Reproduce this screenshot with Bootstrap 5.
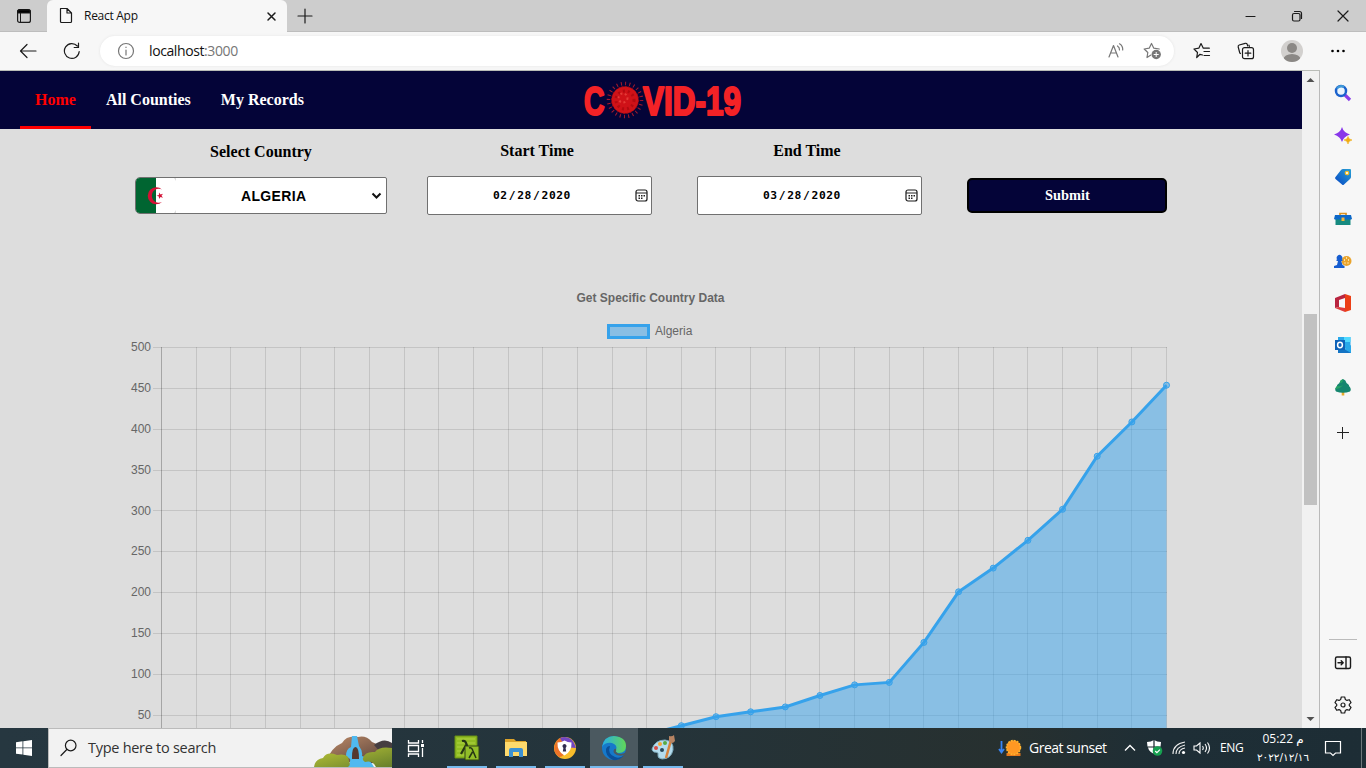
<!DOCTYPE html>
<html lang="en">
<head>
<meta charset="utf-8">
<meta name="viewport" content="width=device-width, initial-scale=1">
<title>React App</title>
<link href="https://cdn.jsdelivr.net/npm/bootstrap@5.3.0/dist/css/bootstrap.min.css" rel="stylesheet">
<style>
body{font-family:"Open Sans","Noto Sans",sans-serif;font-size:12px;line-height:1.3;color:#111;background:#f7f7f7}
svg{display:block;flex:none}
.ln{fill:none;stroke:#1b1b1b;stroke-width:1.2;stroke-linecap:round;stroke-linejoin:round}
.cell{display:flex;align-items:center;justify-content:center;flex:none}
.tabs{height:32px;background:#cdcdcd;flex:none;box-shadow:inset 0 -1px #bdbdbd}
.tab{width:240px;background:#f7f7f7;border-radius:6px 6px 0 0;padding-left:10px}
.tab span{letter-spacing:-.28px;font-size:12px;margin-left:9px}
.tools{height:38px;flex:none}
.address{width:1074px;height:30px;border-radius:15px;background:#fff;margin-left:6px;box-shadow:0 0 3px #e4e4e4}
.address p{font-size:14px;letter-spacing:-.4px;margin-left:14px}
.port{color:#767676}
.view{width:1320px;border-top:1px solid #b9bcb7;border-right:1px solid #b9b9b9}
.site{background:#ddd;font-family:"Liberation Serif",serif;font-size:16px;font-weight:700;color:#000}
.topnav{height:58px;background:#040438;padding-left:20px}
.topnav a{height:58px;padding:0 15px;line-height:58px;color:#fff;text-decoration:none}
.topnav a.on{color:red;border-bottom:3px solid red}
.brandmark{margin-left:260px}
.controls{height:146px;padding:12px 0 0 135px}
.controls label{height:20px;line-height:20px;display:block;text-align:center}
.fld{background:#fff;border:1px solid #707070}
.country{width:252px;height:37px;margin-top:16px;border-radius:5px 2px 2px 5px;font:700 14px "Liberation Sans",sans-serif;overflow:hidden}
.when{width:225px;height:39px;margin-top:15px;border-radius:2px;font:700 11.3px "DejaVu Sans Mono",monospace;letter-spacing:.5px}
.when i{font-style:normal;margin:0 1.2px}
.send{width:200px;height:35px;margin-top:37px;background:#040438;border:2px solid #000;border-radius:5px;color:#fff;font:inherit;font-size:14.4px;padding:0 0 0 1px}
.scroller{width:17px;background:#f1f1f1}
.thumb{height:191px;width:13px;background:#c1c1c1;margin-top:227px}
.side{width:46px}
.side .cell{height:42px}
.rule{height:1px;width:28px;background:#bbb;margin-bottom:2px}
.taskbar{height:40px;background:linear-gradient(90deg,#263740,#24343b 45%,#27302f 74%,#1e2e36 85%,#1d2d35);color:#fff;flex:none}
.search{width:344px;background:#f2f2f2;border:1px solid #bbb;color:#333;font-size:14.5px;border-right:0}
.search span{letter-spacing:-.28px;margin-left:11px}
.app{width:48px;height:40px;position:relative}
.app::after{content:"";position:absolute;left:4px;right:4px;bottom:0;height:2px;background:#76b9ed}
.app.now{background:#4b5960}
.app.now::after{left:0;right:0}
.clock{width:56px;text-align:center;line-height:17px;font-size:12px;letter-spacing:-.5px}
</style>
</head>
<body class="d-flex flex-column vh-100 overflow-hidden">

<header class="tabs d-flex">
  <div class="cell" style="width:47px"><svg width="16" height="16" viewBox="0 0 16 16"><rect x="1.6" y="1.6" width="12.8" height="12.8" rx="2" class="ln"/><path d="M1.5 5V3q0-1.5 1.5-1.5h10q1.500 1.500 1.500V5z"/><path d="M2 2h12v3H2zM4.500 5v9" stroke="#1b1b1b"/></svg></div>
  <div class="tab d-flex align-items-center">
    <svg width="18" height="18" viewBox="0 0 18 18"><path class="ln" d="M3.500 1.500h6.500l4.500 4.500v8.500q0 1-1 1h-9q-1 0-1-1zM10 1.500V6h4.500"/></svg>
    <span>React App</span>
    <svg class="ms-auto" style="margin-right:10px" width="11" height="11" viewBox="0 0 11 11"><path class="ln" style="stroke-width:1.500" d="M2 2l7 7M9 2L2 9"/></svg>
  </div>
  <div class="cell" style="width:35px"><svg width="16" height="16" viewBox="0 0 16 16"><path class="ln" d="M8 1v14M1 8h14"/></svg></div>
  <div class="ms-auto d-flex">
    <div class="cell" style="width:46px"><svg width="12" height="12"><path class="ln" d="M1 6.500h9"/></svg></div>
    <div class="cell" style="width:46px"><svg width="12" height="12" viewBox="0 0 12 12"><rect class="ln" x="1.500" y="3.500" width="7.500" height="7.500" rx="1.500"/><path class="ln" d="M3.500 1.500h5q2 0 2 2v5"/></svg></div>
    <div class="cell" style="width:46px"><svg width="12" height="12"><path class="ln" d="M1 1l10 10M11 1L1 11"/></svg></div>
  </div>
</header>

<div class="tools d-flex align-items-center">
  <div class="cell" style="width:56px"><svg width="18" height="16" viewBox="0 0 18 16"><path class="ln" d="M17 8H2M8 1.500L1.500 8 8 14.500"/></svg></div>
  <div class="cell" style="width:32px;margin-right:6px"><svg width="18" height="18" viewBox="0 0 18 18"><path class="ln" d="M16.200 9.500A7.400 7.400 0 1 1 14.300 4M15.500 1.200v4.300h-4.300"/></svg></div>
  <div class="address d-flex align-items-center">
    <svg style="margin-left:17px" width="18" height="18" viewBox="0 0 18 18"><g class="ln" style="stroke:#767676"><circle cx="9" cy="9" r="7.500"/><path d="M9 8v5M9 5.200v.3"/></g></svg>
    <p class="my-0">localhost<span class="port">:3000</span></p>
    <svg class="ms-auto" width="18" height="18" viewBox="0 0 18 18"><path class="ln" style="stroke:#777" d="M2 15L6.500 3.500 11 15M3.500 11h6M10.500 4q2.200 1.500 2 4M12.500 1.800q3.600 2.200 3.200 6.200"/></svg>
    <svg style="margin:0 12px 0 18px" width="19" height="18" viewBox="0 0 19 18"><path class="ln" style="stroke:#777" d="M7.500 13.200L4 15.500l.8-5L1.200 7l5-.8L8.500 1.500l2.300 4.700 5.500.8"/><circle cx="13.200" cy="12.500" r="4.700" fill="#777"/><path d="M13.200 10v5M10.700 12.500h5" stroke="#fff"/></svg>
  </div>
  <div class="cell" style="width:44px;margin-left:6px"><svg width="18" height="18" viewBox="0 0 18 18"><path class="ln" d="M9.500 13L7 12.300 3.700 15.500l.8-5L1 7l4.800-.8L8 1.500l2.300 4.700h6M11 9.500h5.500M11 13.500h5.500"/></svg></div>
  <div class="cell" style="width:44px"><svg width="18" height="18" viewBox="0 0 18 18"><g class="ln"><path d="M3.500 11.500L2.800 11 1.200 5q-.3-1.500 1-2l6-1.700q1.500-.3 2 1l.5 1.700M12.300 4.500L12 3"/><rect x="5.500" y="5.700" width="11" height="11" rx="2"/><path d="M11 8.500v5.500M8.200 11.200h5.600"/></g></svg></div>
  <div class="cell" style="width:48px"><svg width="24" height="24" viewBox="0 0 24 24"><clipPath id="face"><circle cx="12" cy="12" r="11"/></clipPath><g clip-path="url(#face)"><path fill="#d2d0ce" d="M0 0h24v24H0z"/><circle cx="12" cy="9" r="5" fill="#8b8885"/><ellipse cx="12" cy="20.500" rx="8.500" ry="5.500" fill="#8b8885"/></g></svg></div>
  <div class="cell" style="width:44px"><svg width="16" height="4"><circle cx="2.500" cy="2" r="1.300"/><circle cx="8" cy="2" r="1.300"/><circle cx="13.500" cy="2" r="1.300"/></svg></div>
</div>

<div class="d-flex flex-grow-1 overflow-hidden">
  <div class="view d-flex flex-shrink-0">
    <main class="site flex-grow-1 overflow-hidden">
      <nav class="topnav d-flex align-items-center">
        <a class="on" href="#">Home</a><a href="#">All Counties</a><a href="#">My Records</a>
        <svg class="brandmark" width="170" height="56" viewBox="580 71 170 56" font-family="'Liberation Sans',sans-serif" font-weight="700" font-size="40.500" fill="#f32226" stroke="#f32226" stroke-width="2.200" stroke-linejoin="round">
          <text x="585" y="114" textLength="20.500" lengthAdjust="spacingAndGlyphs">C</text>
          <text x="644" y="114" textLength="98" lengthAdjust="spacingAndGlyphs">VID-19</text>
          <circle cx="626" cy="99" r="16.500" fill="none" stroke="#a81a2c" stroke-width="3.500" stroke-dasharray="1 3.300"/>
          <circle cx="626" cy="99" r="13.500" fill="#cf1218" stroke="#9c0a14" stroke-width="1" stroke-dasharray="2 1.500"/>
          <circle cx="626" cy="99" r="9" fill="none" stroke="#b30a10" stroke-width="3" stroke-dasharray="2 3"/>
          <circle cx="624" cy="97" r="4.500" fill="none" stroke="#e43a36" stroke-width="2" stroke-dasharray="2 2.500"/>
        </svg>
      </nav>
      <section class="controls d-flex">
        <div><label style="padding-top:1px">Select Country</label>
          <div class="fld country d-flex align-items-center">
            <svg width="40" height="35" viewBox="0 0 40 35"><path fill="#fff" d="M20 0h20v35H20z"/><path fill="#006531" d="M0 0h20v35H0z"/><path fill="#d21034" d="M26 11.500A8.500 8.500 0 1 0 26 24A7 7 0 1 1 26 11.500zM20.500 17.800l2.400-.9.100-2.500 1.500 2 2.500-.7-1.500 2.100 1.500 2-2.500-.7-1.500 2-.1-2.500z"/><path fill="#ddd" d="M38 0h2v3zM38 35h2v-3z"/></svg>
            <span style="margin-left:65px;letter-spacing:.35px">ALGERIA</span>
            <svg class="ms-auto me-1" width="11" height="8"><path d="M1.500 1.500l4 4 4-4" fill="none" stroke="#111" stroke-width="2"/></svg>
          </div></div>
        <div style="margin-left:40px"><label style="padding-right:5px">Start Time</label>
          <div class="fld when d-flex align-items-center"><span style="margin-left:65px">02<i>/</i>28<i>/</i>2020</span><svg class="ms-auto" style="margin-right:3px" width="13" height="13" viewBox="0 0 13 13"><use href="#cal"/></svg></div></div>
        <div style="margin-left:45px"><label style="padding-right:5px">End Time</label>
          <div class="fld when d-flex align-items-center"><span style="margin-left:65px">03<i>/</i>28<i>/</i>2020</span><svg class="ms-auto" style="margin-right:3px" width="13" height="13" viewBox="0 0 13 13"><g id="cal"><rect x="1" y="1" width="11" height="11" rx="2" class="ln"/><path d="M1 4h11" stroke="#222"/><path d="M3.500 6.700h6.500M3.500 9.200h4.500" stroke="#222" stroke-width="1.400" stroke-dasharray="1.500 1"/></g></svg></div></div>
        <button class="send" style="margin-left:45px">Submit</button>
      </section>
      <svg id="chart" width="1302" height="453" viewBox="0 275 1302 453" font-family="'Liberation Sans',sans-serif" font-size="12" font-weight="400" fill="#666">
        <text x="650.500" y="302" text-anchor="middle" font-weight="700">Get Specific Country Data</text>
        <rect x="608.500" y="325.500" width="40" height="12" fill="#89bee4" stroke="#36a2eb" stroke-width="3"/>
        <text x="655" y="335">Algeria</text>
      </svg>
    </main>
    <div class="scroller d-flex flex-column align-items-center">
      <svg width="17" height="16"><path d="M4.500 11h8L8.500 7z" fill="#505050"/></svg>
      <div class="thumb"></div>
      <svg class="mt-auto" width="17" height="16"><path d="M4.500 5h8l-4 4z" fill="#505050"/></svg>
    </div>
  </div>

  <aside class="side d-flex flex-column align-items-center" style="padding-top:2px">
    <div class="cell"><svg width="18" height="18" viewBox="0 0 18 18"><path d="M11 11l5 5" stroke="#8a3ee8" stroke-width="3.200"/><circle cx="7" cy="7" r="5" fill="#eaf5fd" stroke="#1b62cd" stroke-width="2.500"/><path d="M3 4.500a5 5 0 0 1 7-1.500" fill="none" stroke="#409ad8" stroke-width="2.300"/></svg></div>
    <div class="cell"><svg width="18" height="18" viewBox="0 0 18 18"><path fill="#8938ea" d="M8 1Q9.500 6.500 16 8.500 9.500 10.500 8 16 6.500 10.500 0 8.500 6.500 6.500 8 1z"/><path fill="#f0ac13" stroke="#f0ac13" stroke-width=".6" d="M14 10.500q.5 3 4 3.500-3.500.5-4 4-.5-3.500-4-4 3.500-.5 4-3.500z"/></svg></div>
    <div class="cell"><svg width="18" height="18" viewBox="0 0 18 18"><defs><linearGradient id="tg" x1="1" x2="0" y2="1"><stop stop-color="#28a0d4"/><stop offset="1" stop-color="#0646c4"/></linearGradient></defs><path fill="url(#tg)" d="M9 1h7q1 0 1 1v7q0 1-1 2l-6 5.500q-1 1-2 0L1.500 11q-1-1 0-2L7 2q1-1 2-1z"/><circle cx="13" cy="5" r="1.700" fill="#fff" stroke="#edbb2a" stroke-width="1.300"/></svg></div>
    <div class="cell"><svg width="18" height="16" viewBox="0 0 18 16"><path d="M6 5V2.500h6V5" fill="none" stroke="#dc9223" stroke-width="1.700"/><path fill="#0d68c8" d="M1 4h16l1 4-2 1H2L0 8z"/><path fill="#168a80" d="M1.500 8.500h15V14h-15z"/><path fill="#f5b53b" d="M7.500 6.500h3V10h-3z"/></svg></div>
    <div class="cell"><svg width="18" height="18" viewBox="0 0 18 18"><circle cx="12.500" cy="9" r="5" fill="#eaa42c"/><path d="M10 8h1M14 8h1M12 6h1M10.500 11h1M13.500 11h1" stroke="#fff4cc" stroke-width="1.300"/><path fill="#165dd0" d="M3 13l1-4H2.500V7.500h.8a2.800 2.800 0 1 1 4.400 0H8.500V9H7.200l1.300 4 2 1v2H0v-2z"/></svg></div>
    <div class="cell"><svg width="18" height="20" viewBox="0 0 18 20"><path fill="#ec3f16" d="M11 1l6 2v14l-6 2z"/><path fill="#b92540" d="M1 5l10-4v4L5 7v7l-4 1z"/><path fill="#df3c3c" d="M1 15l4-1 6 1v4z"/></svg></div>
    <div class="cell"><svg width="18" height="18" viewBox="0 0 18 18"><path fill="#28a8ea" d="M4 1h12.500v11H4z"/><path fill="#50d9ff" d="M10 1h6.500v5H10z"/><path fill="#1474c4" d="M4 9l13 7v1H4z"/><path fill="#28a8ea" d="M17 9v8l-7-4z"/><path fill="#0e62b8" d="M1 4h10v10H1z"/><ellipse cx="6" cy="9" rx="2.400" ry="2.700" fill="none" stroke="#fff" stroke-width="1.500"/></svg></div>
    <div class="cell"><svg width="18" height="18" viewBox="0 0 18 18"><path fill="#e8ac2c" d="M7.700 12h2.600v5.500H7.700z"/><path fill="#16866f" d="M9 1q3 1 3.500 4 3 2 2.500 3 3 3 1 5.500Q9 16 2 13.500 0 11 3 8q-.5-1 2.500-3Q6 2 9 1z"/><path fill="#27a466" d="M9 1Q6 2 5.500 5q2 0 3-1zM3 8q3 1 6-1-3 4-8 4z"/></svg></div>
    <div class="cell" style="height:50px"><svg width="14" height="14"><path d="M6.500 1v12M1 6.500h12" stroke="#222"/></svg></div>
    <div class="rule mt-auto"></div>
    <div class="cell"><svg width="18" height="16" viewBox="0 0 18 16"><g class="ln" style="stroke-width:1.400"><rect x="1.500" y="2" width="15" height="11.500" rx="1.500"/><path d="M12 2v11.500M4 7.800h5M7.200 5.800l2 2-2 2"/></g></svg></div>
    <div class="cell" style="margin-bottom:2px"><svg width="18" height="18" viewBox="0 0 18 18"><g class="ln"><path d="M7.300 1h3.400l.6 2.400 1.700 1 2.300-.7L17 6.600 15.300 8.300v1.400L17 11.400l-1.700 2.900-2.300-.7-1.700 1-.6 2.400H7.300l-.6-2.400-1.700-1-2.300.7L1 11.400l1.700-1.700V8.300L1 6.600l1.700-2.900 2.300.7 1.700-1z"/><circle cx="9" cy="9" r="2"/></g></svg></div>
  </aside>
</div>

<footer class="taskbar d-flex align-items-center">
  <div class="cell" style="width:48px"><svg width="16" height="16" viewBox="0 0 16 16"><path fill="#fff" d="M0 2.200L6.500 1.300V7.500H0zM7.300 1.200L16 0v7.500H7.300zM0 8.300h6.500v6.300L0 13.700zM7.300 8.300H16V16l-8.700-1.200z"/></svg></div>
  <div class="search d-flex align-items-center h-100">
    <svg style="margin-left:11px" width="17" height="18" viewBox="0 0 17 18"><circle class="ln" cx="10.700" cy="6.500" r="5.300"/><path class="ln" d="M6.800 10.500L1 16.500"/></svg>
    <span>Type here to search</span>
    <svg class="ms-auto align-self-end" width="78" height="32" viewBox="0 0 78 32"><defs><linearGradient id="rk" x2="1" y2="1"><stop stop-color="#bd8b68"/><stop offset="1" stop-color="#4d3a36"/></linearGradient><linearGradient id="gr" x2="1" y2="1"><stop stop-color="#bcc637"/><stop offset="1" stop-color="#667f2c"/></linearGradient></defs><path fill="url(#rk)" d="M12 26Q18 12 28 8 33 0 44 2q8-2 14 5l7 3q10-5 13-1v20z"/><path fill="#463e41" d="M60 10q10-8 18-2v7q-8-3-12 2z"/><path fill="#50b9ef" d="M38 1h5l2 10q4 5 3 10 7 2 12 11H33q4-5 3-8l-4-3q0-7 5-9z"/><path fill="#55382f" d="M38 22q0-10 3.500-10T45 24h-7z"/><path fill="url(#gr)" d="M0 32q1-8 9-9 4-7 14-3 12-2 12 6 2 4-1 6zM49 23q2-7 12-6 4-6 17-4v19H62q-3-7-11-5-3-2-2-4z"/></svg>
  </div>
  <div class="cell" style="width:48px;margin-right:3px"><svg width="18" height="17" viewBox="0 0 18 17"><path d="M1.500 0v3h10V0M1.500 17v-3h10v3M1.500 5.500h10v6h-10zM15.500 0v3M15.500 8v9" fill="none" stroke="#fff" stroke-width="1.300"/><path fill="#fff" d="M14 4h3v3h-3z"/></svg></div>
  <div class="d-flex" style="gap:1px">
    <div class="cell app"><svg width="26" height="26" viewBox="0 0 26 26"><path fill="#91bd23" stroke="#668e14" d="M1 1h22v22H1z"/><path d="M3 4h18M3 8h18M3 12h18M3 16h18M3 20h18" stroke="#aed244"/><path fill="none" stroke="#253514" stroke-width="2.200" d="M8 6q3-1 4 2l4 11M12 10L7 19"/><path fill="#92be29" stroke="#304317" d="M11 11h14v14H11z"/><path fill="none" stroke="#253514" stroke-width="1.500" d="M15 13q3-1 4 3l3 7M18.500 17l-3.500 6"/></svg></div>
    <div class="cell app"><svg width="24" height="22" viewBox="0 0 24 22"><path fill="#dda329" d="M1 2h9l2 2h10v8H1z"/><path fill="#ffda6c" d="M1 5h22v14H1z"/><path fill="#3d91d2" d="M5 20v-7q0-2 2-2h10q2 0 2 2v7h-4v-5H9v5z"/></svg></div>
    <div class="cell app"><svg width="24" height="24" viewBox="0 0 24 24"><circle cx="12" cy="12" r="11" fill="#f7bd2b"/><path fill="#ed7328" d="M12 1A11 11 0 0 0 6 21q6 0 6-9z"/><path fill="#7247c2" d="M7 2Q19-2 23 12L12 11z"/><path fill="#fff" d="M11.500 4.500q3 2 7 2 .5 9-7 13-7.500-4-7-13 4 0 7-2z"/><path fill="#312d50" d="M11.500 8a2.200 2.200 0 0 1 1.100 4l.6 3.500h-3.400l.6-3.500A2.200 2.200 0 0 1 11.500 8z"/></svg></div>
    <div class="cell app now"><svg width="26" height="26" viewBox="0 0 26 26"><defs><linearGradient id="eg"><stop stop-color="#27aee5"/><stop offset="1" stop-color="#61d657"/></linearGradient></defs><circle cx="13" cy="13" r="12" fill="#1679ca"/><path fill="url(#eg)" d="M1 12Q3 1 13 1q12 1 12 10 0 7-7 7-5 0-3-3 2-5-4-7-7-1-10 4z"/><path fill="#0b4f99" d="M9 11q-3 8 5 11 5 2 9-2-4 6-11 5Q4 21 5 14q1-3 4-3z"/><path fill="#4b5960" d="M14.500 13.500q1.500 1.500.3 3 1.700 2.500 5.200 2.500 3.500-.3 5-2l-1.500 3q-7 2-10.500-2-1.500-3 1.500-4.500z"/></svg></div>
    <div class="cell app"><svg width="26" height="26" viewBox="0 0 26 26"><path fill="#b4dcee" stroke="#7eabbc" d="M2 14Q5 5 15 5q9 1 8 10-2 9-11 9-5-1-4-4 1-3-4-3-2-1-2-3z"/><circle cx="6" cy="13" r="2" fill="#d84c45"/><circle cx="10" cy="9" r="2" fill="#f2a437"/><circle cx="15" cy="8" r="2" fill="#57aa42"/><circle cx="12" cy="15" r="2" fill="#29485a"/><path stroke="#d7833d" stroke-width="2.500" d="M21 5l-5 18"/><path fill="#b78463" d="M19 1q3 1 5-1l1 6q-3 4-6 0z"/></svg></div>
  </div>
  <div class="ms-auto d-flex align-items-center h-100">
    <svg width="24" height="20" viewBox="0 0 24 20"><path d="M3.500 3v11M1 11l2.500 3.500L6 11" fill="none" stroke="#3885f5" stroke-width="1.800"/><path fill="#e7791c" d="M8.500 15h14v3h-14z"/><circle cx="15.500" cy="9.500" r="7" fill="#ff9823" stroke="#ffb42f" stroke-width="1.500" stroke-dasharray="2 1"/></svg>
    <span style="font-size:14px;letter-spacing:-.5px;margin-left:7px;width:79px;white-space:nowrap">Great sunset</span>
    <svg style="margin-left:16px" width="12" height="8"><path d="M1 6.500l5-5 5 5" fill="none" stroke="#fff" stroke-width="1.300"/></svg>
    <svg style="margin-left:10px" width="17" height="18" viewBox="0 0 17 18"><path fill="#fff" d="M8 1q3 2 7 2 0 9-7 12Q1 12 1 3q4 0 7-2z"/><path d="M8 1v14M1.500 8h13" stroke="#17262b" stroke-width="1.200"/><circle cx="11.500" cy="12" r="4.800" fill="#16a050"/><path d="M9.200 12l1.700 1.700 3-3" fill="none" stroke="#fff" stroke-width="1.200"/></svg>
    <svg style="margin-left:9px" width="15" height="14" viewBox="0 0 15 14"><path fill="none" stroke="#eee" stroke-width="1.100" d="M1 13Q1 3 13 1M4 13Q4 6 13 4M7 13q0-5 6-6"/><circle cx="11.500" cy="11.500" r="1.600" fill="#fff"/></svg>
    <svg style="margin-left:6px" width="18" height="14" viewBox="0 0 18 14"><path fill="none" stroke="#fff" stroke-width="1.100" d="M1 5h2.500L7 2v10L3.500 9H1zM9.500 5q1.500 2 0 4M12 3q3 4 0 8M14.500 1.500q4 5.500 0 11"/></svg>
    <span style="margin-left:9px;width:25px;letter-spacing:-.3px">ENG</span>
    <div class="clock" style="margin-left:10px"><div style="white-space:nowrap">05:22 <span style="font-family:'DejaVu Sans',sans-serif">م</span></div><bdo dir="ltr" style="font-family:'DejaVu Sans',sans-serif;font-size:10.500px">٢٠٢٢/١٢/١٦</bdo></div>
    <svg style="margin:0 19px 0 13px" width="18" height="18" viewBox="0 0 18 18"><path fill="none" stroke="#fff" stroke-width="1.200" d="M1.500 2.500h15v11.500h-5L9 16.500 6.500 14h-5z"/></svg>
    <div class="h-100" style="border-left:1px solid #6d777b;width:5px"></div>
  </div>
</footer>

<script>
// Daily case counts for the filled line chart
const cases = [1,1,1,3,5,12,12,17,17,19,20,20,20,24,26,37,48,54,60,74,87,90,139,201,230,264,302,367,409,454];
const chart = document.getElementById('chart');
const X = i => 161.5 + i * 1005 / 29, Y = v => 755.9 - v * 0.8165;
const add = (tag, attrs, text) => {
  const el = document.createElementNS('http://www.w3.org/2000/svg', tag);
  for (const k in attrs) el.setAttribute(k, attrs[k]);
  if (text !== undefined) el.textContent = text;
  chart.appendChild(el);
};
const snap = n => Math.floor(n) + 0.5;
for (let i = 0; i < 30; i++) add('path', {d: `M${snap(X(i))} 347V728`, stroke: '#000', 'stroke-opacity': i ? 0.11 : 0.25});
for (let v = 500; v >= 50; v -= 50) {
  add('path', {d: `M153 ${snap(Y(v))}H1167`, stroke: '#000', 'stroke-opacity': 0.11});
  add('text', {x: 151, y: Y(v) + 3.600, 'text-anchor': 'end'}, v);
}
const pts = cases.map((v, i) => `${X(i)} ${Y(v)}`).join('L');
add('path', {d: `M${pts}V755.9H161.5z`, fill: '#36a2eb', 'fill-opacity': 0.5});
add('path', {d: `M${pts}`, fill: 'none', stroke: '#36a2eb', 'stroke-width': 3});
cases.forEach((v, i) => add('circle', {cx: X(i), cy: Y(v), r: 3, fill: '#36a2eb', 'fill-opacity': 0.5, stroke: '#36a2eb'}));
</script>
<script src="https://cdn.jsdelivr.net/npm/bootstrap@5.3.0/dist/js/bootstrap.bundle.min.js"></script>
</body>
</html>
